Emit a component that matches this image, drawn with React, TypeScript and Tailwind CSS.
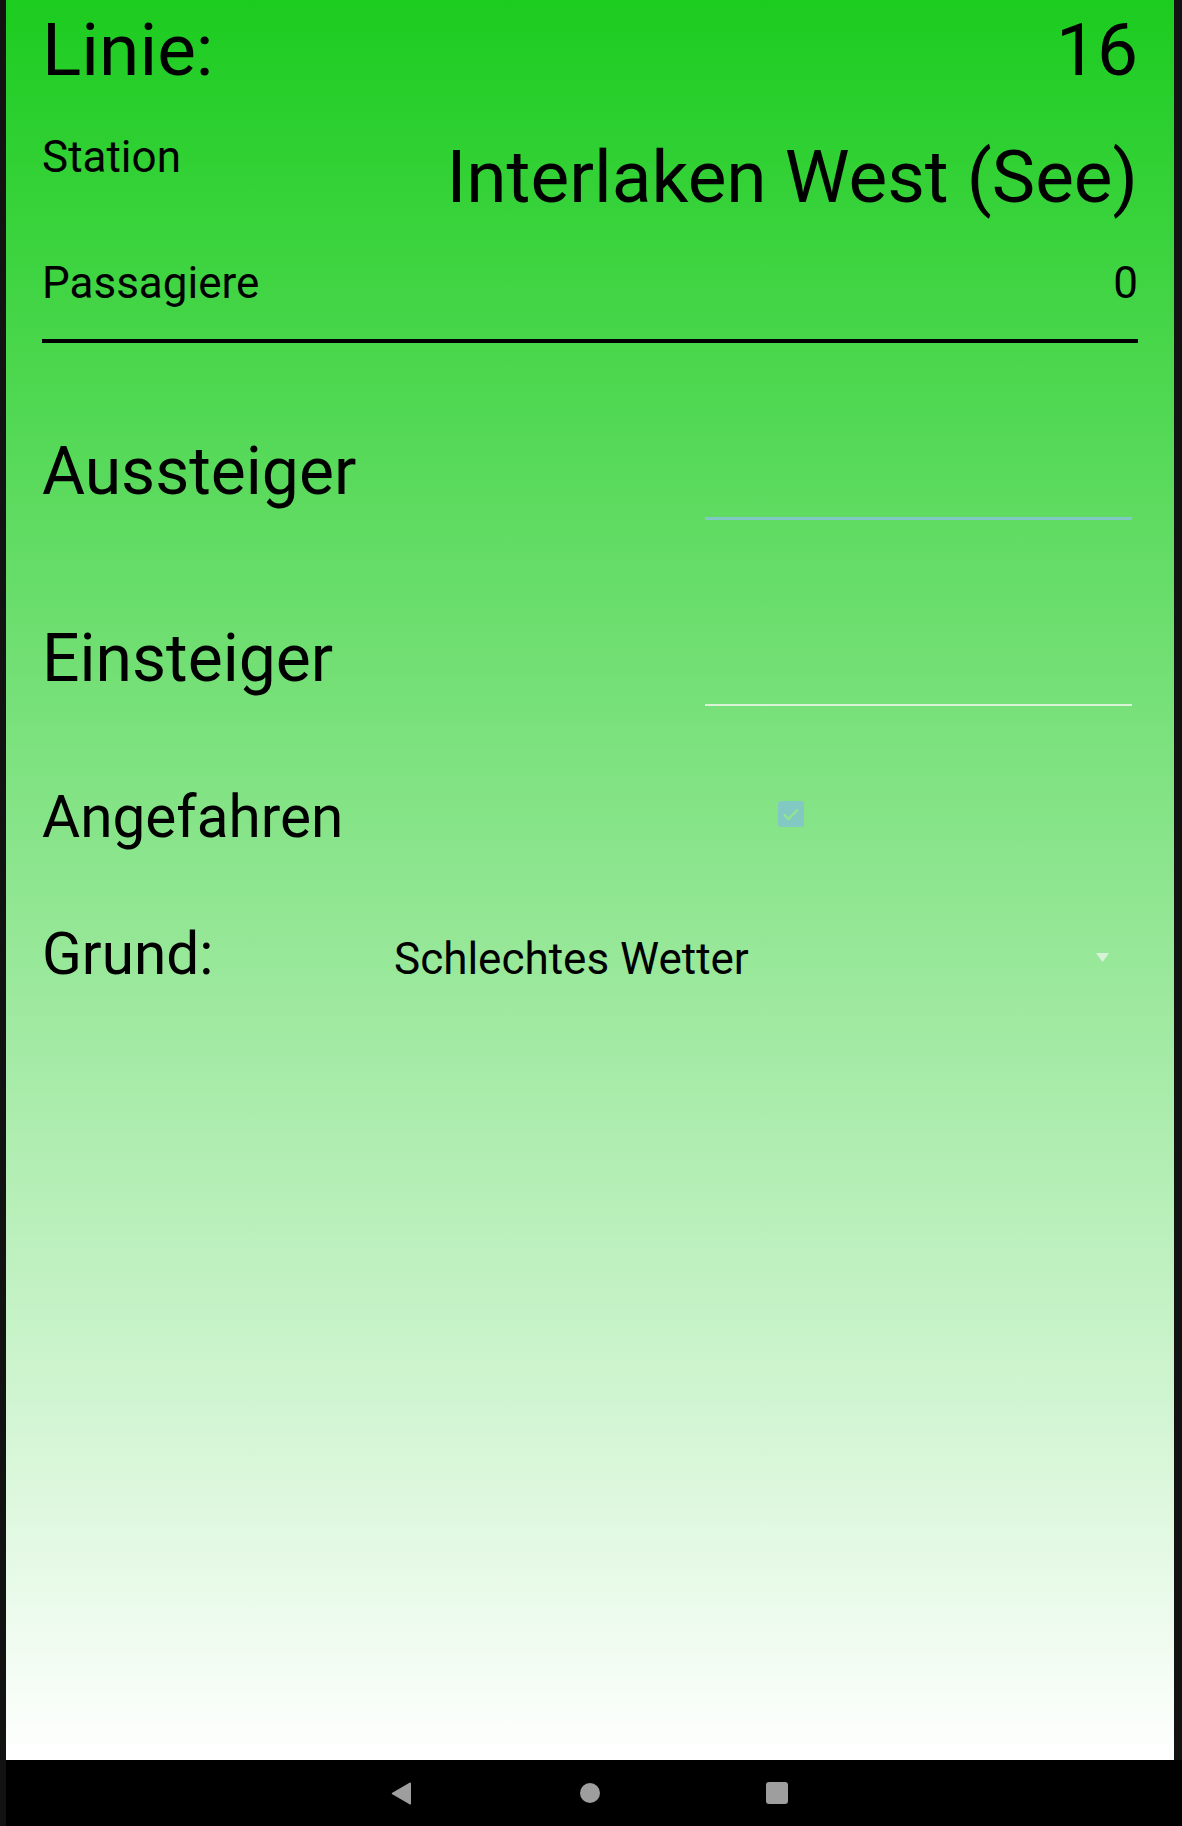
import React from "react";

// Haltestellen-Erfassung (Android-Ansicht)
const ROBOTO = { fontFamily: "Roboto, 'Noto Sans', sans-serif" } as const;

function CheckBox() {
  return (
    <div className="mt-[18px] flex h-[26px] w-[26px] items-center justify-center rounded-[3px] bg-[#82c9c4]">
      <svg width="20" height="20" viewBox="0 0 20 20">
        <path d="M3 10.5l4.5 4.5L17 5.5" fill="none" stroke="#8fe394" strokeWidth="2.6" />
      </svg>
    </div>
  );
}

function NavBar() {
  return (
    <div className="flex h-[66px] items-center bg-black pl-[385px]">
      <svg width="21" height="23" viewBox="0 0 21 23">
        <path d="M20 1.5v20a1 1 0 0 1-1.5.8L1.3 12.3a1 1 0 0 1 0-1.6L18.5.7A1 1 0 0 1 20 1.5z" fill="#9e9e9e" />
      </svg>
      <div className="ml-[168px] h-5 w-5 rounded-full bg-[#9e9e9e]" />
      <div className="ml-[166px] h-[22px] w-[22px] rounded-[3px] bg-[#9e9e9e]" />
    </div>
  );
}

export default function App() {
  return (
    <div className="flex h-[1826px] w-[1182px] bg-[#121212]" style={ROBOTO}>
      <div className="w-[6px] shrink-0" />
      <div className="flex flex-1 flex-col">
        <div className="flex h-[1760px]">
          <div className="flex w-[1168px] flex-col bg-[linear-gradient(to_bottom,#1ccc1f,#ffffff)] px-9 pt-2 text-black">
            {/* Kopf */}
            <div className="flex justify-between text-[73px] leading-[84px]">
              <span>Linie:</span>
              <span>16</span>
            </div>
            <div className="mt-[40px] flex items-start justify-between">
              <span className="text-[44px] leading-[50px]">Station</span>
              <span className="mt-[3px] text-[73px] leading-[84px]">Interlaken West (See)</span>
            </div>
            <div className="mt-[39px] flex justify-between text-[44px] leading-[50px]">
              <span>Passagiere</span>
              <span>0</span>
            </div>
            <div className="mt-[31px] h-1 bg-black" />

            {/* Eingaben */}
            <div className="mt-[91px] flex items-start">
              <span className="text-[66px] leading-[76px]">Aussteiger</span>
              <div className="ml-auto mr-[6px] h-[86px] w-[427px] border-b-[3px] border-[#80c9c4]" />
            </div>
            <div className="mt-[101px] flex items-start">
              <span className="text-[66px] leading-[76px]">Einsteiger</span>
              <div className="ml-auto mr-[6px] h-[85px] w-[427px] border-b-2 border-[#dbf4d8]" />
            </div>
            <div className="mt-[77px] flex items-start">
              <span className="w-[736px] text-[58.5px] leading-[68px]">Angefahren</span>
              <CheckBox />
            </div>
            <div className="mt-[69px] flex items-start">
              <span className="w-[352px] text-[58.5px] leading-[68px]">Grund:</span>
              <div className="flex flex-1 items-start">
                <span className="mt-[14px] text-[44px] leading-[50px]">Schlechtes Wetter</span>
                <svg className="ml-auto mr-[29px] mt-[33px]" width="13" height="9" viewBox="0 0 13 9">
                  <path d="M0 0h13L6.5 9z" fill="#d8f2d8" />
                </svg>
              </div>
            </div>
          </div>
          <div className="w-2 shrink-0" />
        </div>
        <NavBar />
      </div>
    </div>
  );
}
